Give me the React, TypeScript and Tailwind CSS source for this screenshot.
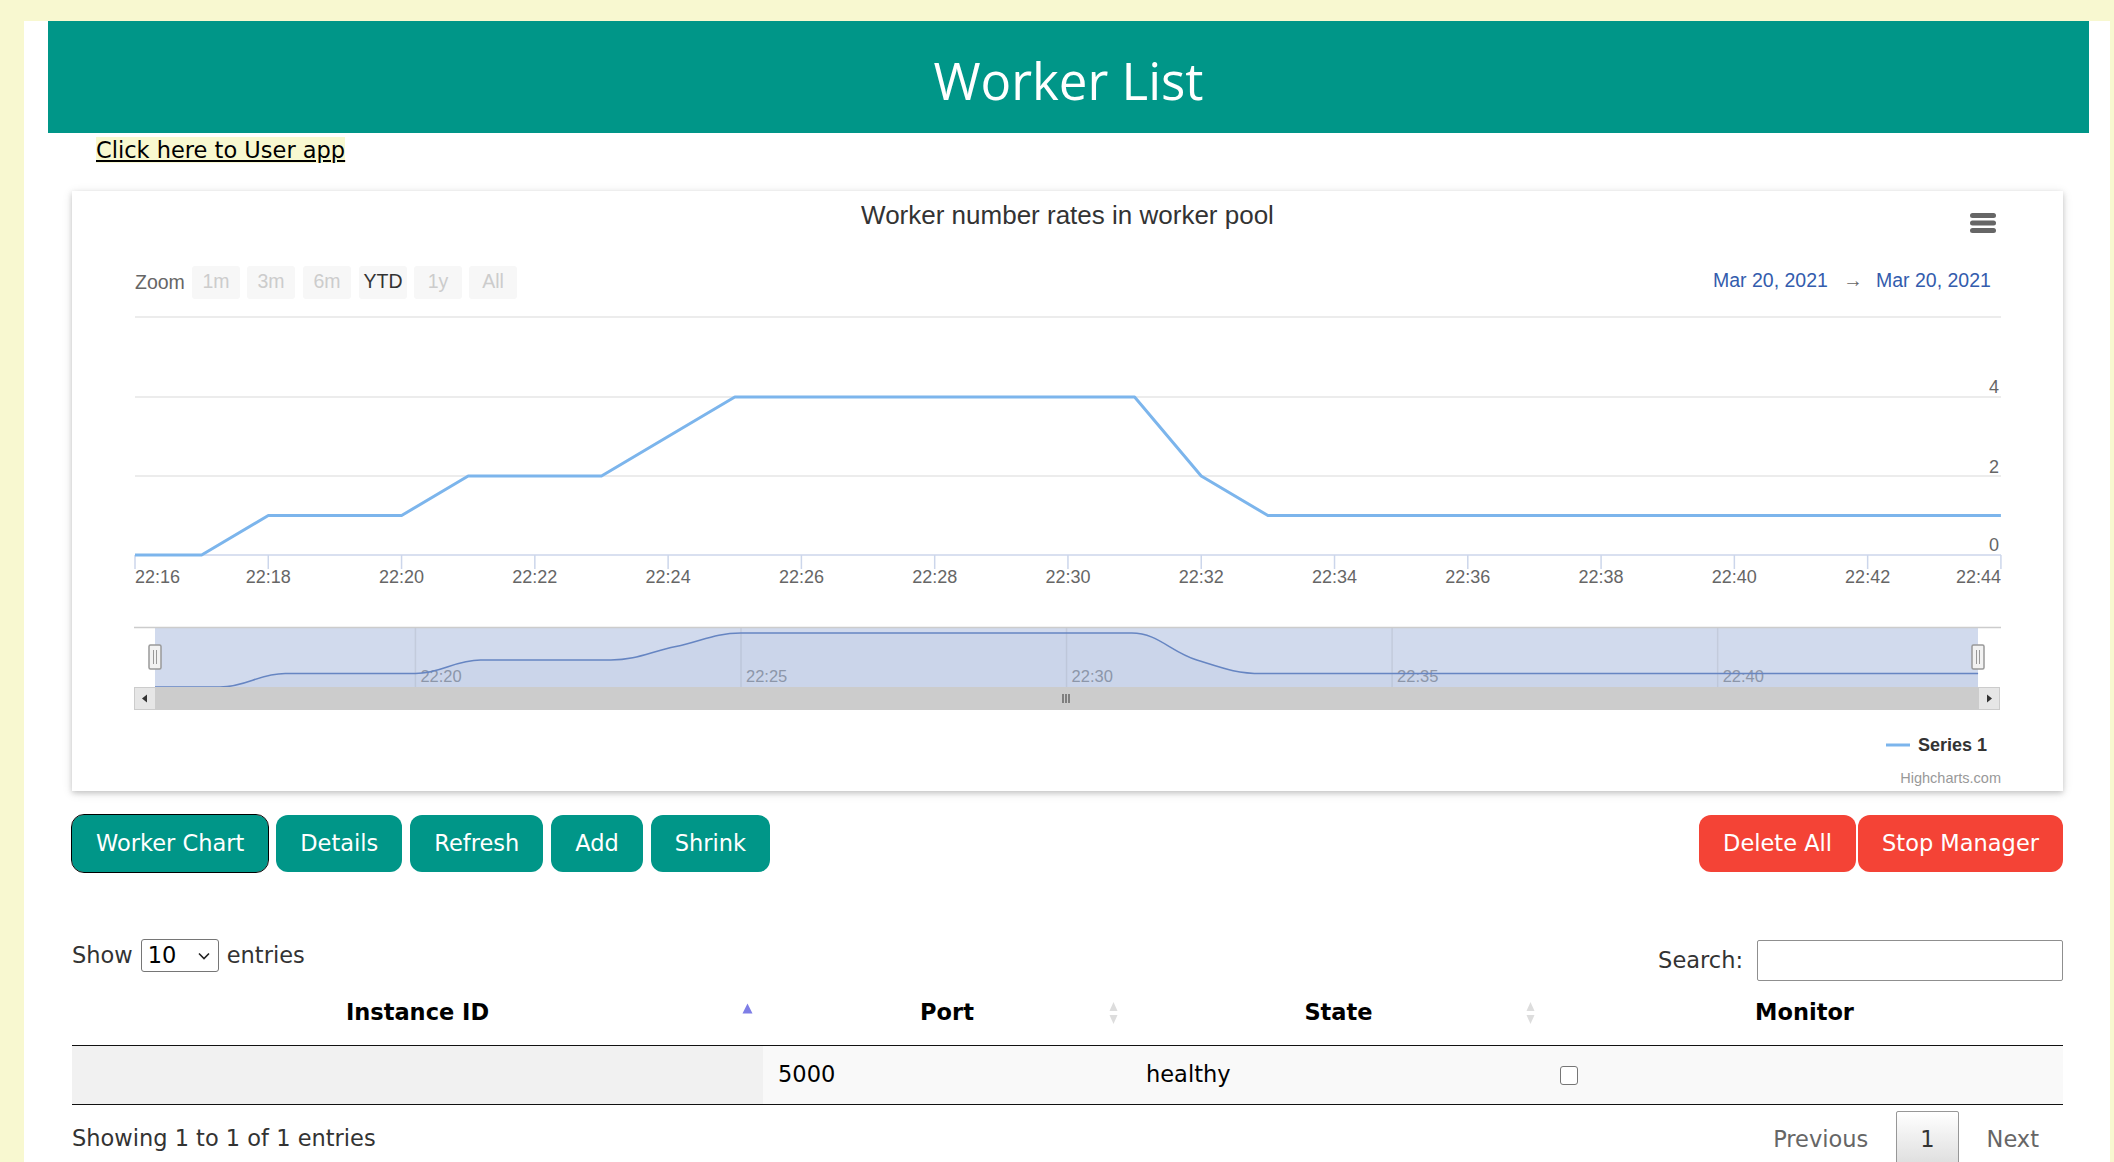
import React from "react";

type Pt = [number, number];

// worker count per minute, starting 22:16
const workers = [0, 0, 1, 1, 1, 2, 2, 2, 3, 4, 4, 4, 4, 4, 4, 4, 2, 1, 1, 1, 1, 1, 1, 1, 1, 1, 1, 1, 1];

const X0 = 63;
const XS = 66.64;
const Y0 = 364;
const YS = 39.5;

const NX0 = 83;
const NXS = 65.11;
const NY0 = 496;
const NYS = 13.5;

const mainPts: Pt[] = workers.map((v, i) => [X0 + i * XS, Y0 - v * YS]);
const navPts: Pt[] = workers.map((v, i) => [NX0 + i * NXS, NY0 - v * NYS]);

function linePath(pts: Pt[]) {
  return pts.map((p, i) => `${i === 0 ? "M" : "L"}${p[0].toFixed(1)},${p[1].toFixed(1)}`).join(" ");
}

function splinePath(pts: Pt[]) {
  const s = 1.5;
  const d = 2.5;
  let path = `M${pts[0][0]},${pts[0][1]}`;
  let prevRight: Pt = pts[0];
  for (let i = 1; i < pts.length; i++) {
    const [x, y] = pts[i];
    const last = pts[i - 1];
    const next = pts[i + 1];
    let left: Pt = [x, y];
    let right: Pt = [x, y];
    if (next) {
      const lcx = (s * x + last[0]) / d;
      let lcy = (s * y + last[1]) / d;
      const rcx = (s * x + next[0]) / d;
      let rcy = (s * y + next[1]) / d;
      const corr = ((rcy - lcy) * (rcx - x)) / (rcx - lcx) + y - rcy;
      lcy += corr;
      rcy += corr;
      if (lcy > last[1] && lcy > y) {
        lcy = Math.max(last[1], y);
        rcy = 2 * y - lcy;
      } else if (lcy < last[1] && lcy < y) {
        lcy = Math.min(last[1], y);
        rcy = 2 * y - lcy;
      }
      if (rcy > next[1] && rcy > y) {
        rcy = Math.max(next[1], y);
        lcy = 2 * y - rcy;
      } else if (rcy < next[1] && rcy < y) {
        rcy = Math.min(next[1], y);
        lcy = 2 * y - rcy;
      }
      left = [lcx, lcy];
      right = [rcx, rcy];
    }
    path += ` C${prevRight[0].toFixed(1)},${prevRight[1].toFixed(1)} ${left[0].toFixed(1)},${left[1].toFixed(1)} ${x.toFixed(1)},${y.toFixed(1)}`;
    prevRight = right;
  }
  return path;
}

const zoomButtons = ["1m", "3m", "6m", "YTD", "1y", "All"];
const zoomX = [120, 175, 231, 287, 342, 397];

const WorkerChart = () => {
  const nav = splinePath(navPts);
  const lastNav = navPts[navPts.length - 1];
  return (
    <svg width="1991" height="600" className="block" style={{ fontFamily: '"Liberation Sans", Arial, sans-serif' }}>
      <text x="995.5" y="33" textAnchor="middle" fontSize="26" fill="#333333">
        Worker number rates in worker pool
      </text>

      {/* export menu */}
      <rect x="1898" y="22" width="26" height="5" rx="2.5" fill="#666666" />
      <rect x="1898" y="29.5" width="26" height="5" rx="2.5" fill="#666666" />
      <rect x="1898" y="37" width="26" height="5" rx="2.5" fill="#666666" />

      {/* range selector */}
      <text x="63" y="98" fontSize="19.5" fill="#666666">Zoom</text>
      {zoomButtons.map((b, i) => (
        <g key={b}>
          <rect x={zoomX[i]} y="75" width="48" height="33" rx="3" fill="#f7f7f7" />
          <text x={zoomX[i] + 24} y="97" textAnchor="middle" fontSize="19.5" fill={b === "YTD" ? "#333333" : "#cccccc"}>
            {b}
          </text>
        </g>
      ))}
      <text x="1641" y="96" fontSize="19.5" fill="#335cad">Mar 20, 2021</text>
      <text x="1781" y="96" textAnchor="middle" fontSize="19.5" fill="#666666">→</text>
      <text x="1804" y="96" fontSize="19.5" fill="#335cad">Mar 20, 2021</text>

      {/* grid */}
      {[126, 206, 285].map((y) => (
        <line key={y} x1="63" x2="1929" y1={y} y2={y} stroke="#e6e6e6" strokeWidth="1.5" />
      ))}
      <line x1="63" x2="1929" y1="364" y2="364" stroke="#ccd6eb" strokeWidth="1.5" />
      {Array.from({ length: 15 }).map((_, i) => {
        const x = X0 + i * 2 * XS;
        const label = `22:${16 + i * 2}`;
        return (
          <g key={i}>
            <line x1={x} x2={x} y1="364" y2="378" stroke="#ccd6eb" strokeWidth="1.5" />
            <text
              x={i === 0 ? 63 : i === 14 ? 1929 : x}
              y="392"
              textAnchor={i === 0 ? "start" : i === 14 ? "end" : "middle"}
              fontSize="18"
              fill="#666666"
            >
              {label}
            </text>
          </g>
        );
      })}
      <text x="1927" y="202" textAnchor="end" fontSize="18" fill="#666666">4</text>
      <text x="1927" y="282" textAnchor="end" fontSize="18" fill="#666666">2</text>
      <text x="1927" y="360" textAnchor="end" fontSize="18" fill="#666666">0</text>

      <path d={linePath(mainPts)} fill="none" stroke="#7cb5ec" strokeWidth="3" strokeLinejoin="round" />

      {/* navigator */}
      <rect x="83" y="436" width="1823" height="60" fill="#d1daed" />
      {[4, 9, 14, 19, 24].map((m, i) => {
        const x = NX0 + m * NXS;
        return (
          <g key={m}>
            <line x1={x} x2={x} y1="436" y2="496" stroke="#c3cbdc" strokeWidth="1.5" />
            <text x={x + 5} y="491" fontSize="16.5" fill="#8f97a8">
              {`22:${20 + i * 5}`}
            </text>
          </g>
        );
      })}
      <line x1="62" x2="1929" y1="436.5" y2="436.5" stroke="#cccccc" strokeWidth="1.5" />
      <path d={`${nav} L${lastNav[0]},496 L${NX0},496 Z`} fill="rgba(102,133,194,0.05)" />
      <path d={nav} fill="none" stroke="#6685c2" strokeWidth="1.5" />

      {[83, 1906].map((cx) => (
        <g key={cx}>
          <rect x={cx - 6} y="454" width="12" height="24" rx="1.5" fill="#f2f2f2" stroke="#999999" strokeWidth="1.5" />
          <line x1={cx - 1.5} x2={cx - 1.5} y1="459" y2="473" stroke="#999999" strokeWidth="1" />
          <line x1={cx + 1.5} x2={cx + 1.5} y1="459" y2="473" stroke="#999999" strokeWidth="1" />
        </g>
      ))}

      {/* scrollbar */}
      <rect x="62" y="496" width="1866" height="23" fill="#f2f2f2" />
      <rect x="83" y="496" width="1823" height="23" fill="#cccccc" />
      <rect x="62.5" y="496.5" width="21" height="22" fill="#e6e6e6" stroke="#cccccc" />
      <path d="M70,507.5 L75,503.5 L75,511.5 Z" fill="#333333" />
      <rect x="1906.5" y="496.5" width="21" height="22" fill="#e6e6e6" stroke="#cccccc" />
      <path d="M1920,507.5 L1915,503.5 L1915,511.5 Z" fill="#333333" />
      {[991, 994, 997].map((x) => (
        <line key={x} x1={x} x2={x} y1="503" y2="512" stroke="#333333" strokeWidth="1" />
      ))}

      {/* legend */}
      <line x1="1814" x2="1838" y1="554" y2="554" stroke="#7cb5ec" strokeWidth="3" />
      <text x="1846" y="560" fontSize="18" fontWeight="bold" fill="#333333">Series 1</text>
      <text x="1929" y="592" textAnchor="end" fontSize="14.5" fill="#999999">Highcharts.com</text>
    </svg>
  );
};

const SortBoth = () => (
  <svg width="9" height="24" viewBox="0 0 9 24">
    <path d="M4.5 1 L8.5 10 L0.5 10 Z" fill="#dddddd" />
    <path d="M4.5 23 L8.5 14 L0.5 14 Z" fill="#dddddd" />
  </svg>
);

const SortAsc = () => (
  <svg width="11" height="11" viewBox="0 0 11 11">
    <path d="M5.5 0.5 L10.5 10.5 L0.5 10.5 Z" fill="#7e7ee6" />
  </svg>
);

const tealBtn = "h-[57px] px-[24px] rounded-[12px] bg-[#009688] text-white";
const redBtn = "h-[57px] px-[24px] rounded-[12px] bg-[#f44336] text-white";

export default function App() {
  return (
    <div
      className="min-h-screen bg-[#f8f8d0] pt-[21px] pl-[24px] pr-[4px] text-[22.5px] leading-[1.5] text-black"
      style={{ fontFamily: '"DejaVu Sans", Verdana, sans-serif' }}
    >
      <div className="bg-white pl-[24px] pr-[21px] min-h-[1141px] pb-[40px]">
        <header className="h-[112px] bg-[#009688] flex items-center justify-center pt-[6px]">
          <h1 className="text-white text-[51px]" style={{ fontFamily: '"Open Sans", "Segoe UI", sans-serif' }}>
            Worker List
          </h1>
        </header>

        <div className="pl-[24px] pr-[26px]">
          <div className="pl-[24px] h-[34px] pt-[1px]">
            <a href="#" className="underline bg-[#f8f8d0] text-black">
              Click here to User app
            </a>
          </div>
        </div>

        <div className="pl-[24px] pr-[26px]">
          <div className="mt-[24px] bg-white shadow-[0_2px_5px_0_rgba(0,0,0,0.16),0_2px_10px_0_rgba(0,0,0,0.12)]">
            <WorkerChart />
          </div>

          <div className="mt-[24px] flex items-center justify-between">
            <div className="flex items-center gap-[8px]">
              <button className={`${tealBtn} outline outline-1 outline-black`}>Worker Chart</button>
              <button className={tealBtn}>Details</button>
              <button className={tealBtn}>Refresh</button>
              <button className={tealBtn}>Add</button>
              <button className={tealBtn}>Shrink</button>
            </div>
            <div className="flex items-center gap-[2px]">
              <button className={redBtn}>Delete All</button>
              <button className={redBtn}>Stop Manager</button>
            </div>
          </div>

          <div className="mt-[66px] flex items-start justify-between text-[#333]">
            <div className="flex items-center h-[33px] gap-[8px] mt-[1px]">
              <span>Show</span>
              <div className="w-[78px] h-[33px] border border-[#767676] rounded-[3px] flex items-center justify-between pl-[6px] pr-[8px] text-black">
                <span>10</span>
                <svg width="12" height="8" viewBox="0 0 12 8">
                  <path d="M1 1.5 L6 6.5 L11 1.5" fill="none" stroke="#222" strokeWidth="1.6" />
                </svg>
              </div>
              <span>entries</span>
            </div>
            <div className="flex items-center gap-[14px] pt-[2px]">
              <span>Search:</span>
              <div className="w-[306px] h-[41px] border border-[#8f8f8f] rounded-[2px] bg-white" />
            </div>
          </div>

          <div className="grid grid-cols-[691px_368px_415px_517px] border-b border-[#111]">
            <div className="relative h-[64px] flex items-center justify-center font-bold">
              Instance ID
              <span className="absolute right-[10px] top-[22px]">
                <SortAsc />
              </span>
            </div>
            <div className="relative h-[64px] flex items-center justify-center font-bold">
              Port
              <span className="absolute right-[13px] top-[20px]">
                <SortBoth />
              </span>
            </div>
            <div className="relative h-[64px] flex items-center justify-center font-bold">
              State
              <span className="absolute right-[11px] top-[20px]">
                <SortBoth />
              </span>
            </div>
            <div className="h-[64px] flex items-center justify-center font-bold">Monitor</div>
          </div>

          <div className="grid grid-cols-[691px_368px_415px_517px] border-b border-[#111]">
            <div className="h-[58px] bg-[#f1f1f1]" />
            <div className="h-[58px] bg-[#f9f9f9] flex items-center px-[15px]">5000</div>
            <div className="h-[58px] bg-[#f9f9f9] flex items-center px-[15px]">healthy</div>
            <div className="h-[58px] bg-[#f9f9f9] flex items-center px-[14px]">
              <span className="block w-[18px] h-[19px] border border-[#767676] rounded-[3px] bg-white" />
            </div>
          </div>

          <div className="flex items-start justify-between text-[#333]">
            <div className="pt-[17px]">Showing 1 to 1 of 1 entries</div>
            <div className="pt-[6px] flex items-center gap-[4px] text-[#666]">
              <span className="px-[23px] py-[11px] border border-transparent">Previous</span>
              <span className="px-[23px] py-[11px] border border-[#979797] rounded-[2px] bg-gradient-to-b from-white to-[#dcdcdc] text-[#333]">
                1
              </span>
              <span className="px-[23px] py-[11px] border border-transparent">Next</span>
            </div>
          </div>
        </div>
      </div>
    </div>
  );
}
